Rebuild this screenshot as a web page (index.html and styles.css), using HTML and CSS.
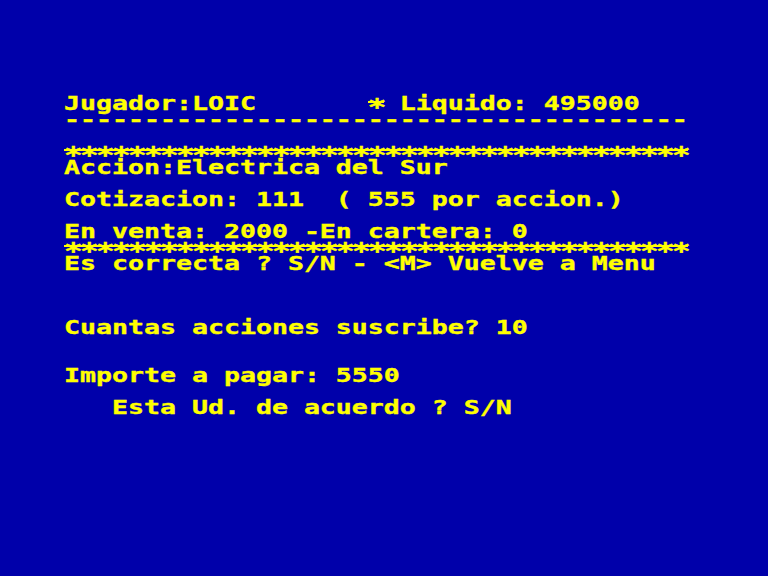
FILE: index.html
```html
<!DOCTYPE html>
<html lang="es">
<head>
<meta charset="utf-8">
<title>Bolsa</title>
<link rel="stylesheet" href="styles.css">
</head>
<body>
<main class="screen">
  <div class="row">Jugador:LOIC       <span class="stars">*</span> Liquido: 495000</div>
  <div class="row">---------------------------------------</div>
  <div class="row"></div>
  <div class="row"><span class="stars">***************************************</span></div>
  <div class="row">Accion:Electrica del Sur</div>
  <div class="row"></div>
  <div class="row">Cotizacion: 111  ( 555 por accion.)</div>
  <div class="row"></div>
  <div class="row">En venta: 2000 -En cartera: 0</div>
  <div class="row"><span class="stars">***************************************</span></div>
  <div class="row">Es correcta ? S/N - &lt;M&gt; Vuelve a Menu</div>
  <div class="row"></div>
  <div class="row"></div>
  <div class="row"></div>
  <div class="row">Cuantas acciones suscribe? 10</div>
  <div class="row"></div>
  <div class="row"></div>
  <div class="row">Importe a pagar: 5550</div>
  <div class="row"></div>
  <div class="row">   Esta Ud. de acuerdo ? S/N</div>
</main>
</body>
</html>
```
FILE: styles.css
```css
html, body {
  margin: 0;
  padding: 0;
  background: #0000aa;
}

body {
  width: 768px;
  height: 576px;
  overflow: hidden;
}

.screen {
  padding: 96px 0 0 64px;
  color: #ffff00;
  font-family: "DejaVu Sans Mono", "Liberation Mono", monospace;
  font-weight: bold;
  font-size: 26.576px;
  -webkit-text-stroke: 0.5px #ffff00;
}

.row {
  height: 16px;
  line-height: 16px;
  white-space: pre;
  transform-origin: 0 0;
  transform: translateY(1.6px) scaleY(0.72);
}

.stars {
  font-size: 31px;
  letter-spacing: -2.664px;
  line-height: 16px;
  vertical-align: -7.2px;
  background: linear-gradient(to bottom,
    transparent 9.67px, #ffff00 9.67px, #ffff00 12.47px, transparent 12.47px);
}
```
